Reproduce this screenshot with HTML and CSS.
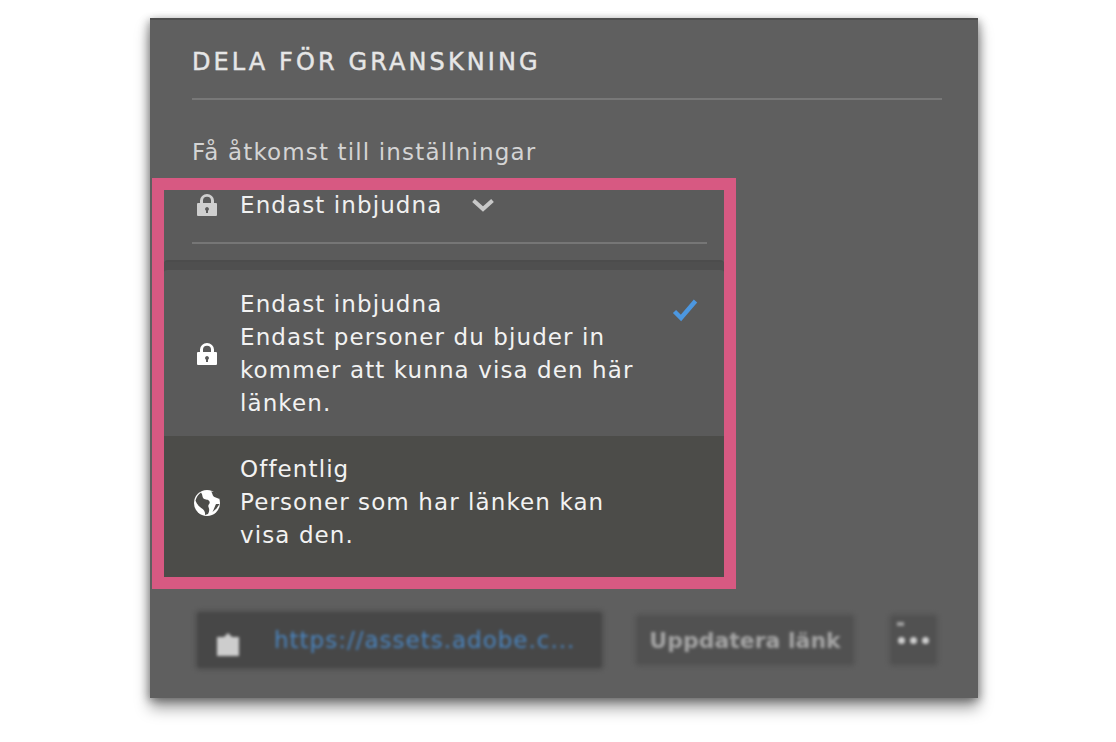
FILE: index.html
```html
<!DOCTYPE html>
<html lang="sv">
<head>
<meta charset="utf-8">
<title>Dela för granskning</title>
<link rel="stylesheet" href="styles.css">
</head>
<body>
<main class="panel">
  <header class="head">
    <h1 class="title">DELA FÖR GRANSKNING</h1>
    <p class="label">Få åtkomst till inställningar</p>
  </header>
  <section class="frame">
    <div class="trigger">
      <svg class="icon dim" viewBox="0 0 20 22"><path fill-rule="evenodd" d="M3 9V6.500a7 6.500 0 0 1 14 0V9h2a1 1 0 0 1 1 1v11a1 1 0 0 1-1 1H1a1 1 0 0 1-1-1V10a1 1 0 0 1 1-1zM6 9h8V6.500a4 3.800 0 0 0-8 0zM10 13a2 2 0 0 0-1 3.700V19h2v-2.300A2 2 0 0 0 10 13z"/></svg>
      <span>Endast inbjudna</span>
      <svg class="chev" viewBox="0 0 24 14"><path d="M2.500 2.500 12 11l9.500-8.500"/></svg>
    </div>
    <div class="rule"></div>
    <div class="menu">
      <div class="option">
        <svg class="icon" viewBox="0 0 20 22"><path fill-rule="evenodd" d="M3 9V6.500a7 6.500 0 0 1 14 0V9h2a1 1 0 0 1 1 1v11a1 1 0 0 1-1 1H1a1 1 0 0 1-1-1V10a1 1 0 0 1 1-1zM6 9h8V6.500a4 3.800 0 0 0-8 0zM10 13a2 2 0 0 0-1 3.700V19h2v-2.300A2 2 0 0 0 10 13z"/></svg>
        <p class="text">Endast inbjudna<br>Endast personer du bjuder in<br>kommer att kunna visa den här<br>länken.</p>
        <svg class="check" viewBox="0 0 26 24"><path d="M2.500 13.500 9 20 23.500 3"/></svg>
      </div>
      <div class="option alt">
        <svg class="icon globe" viewBox="0 0 26 26"><circle cx="13" cy="13" r="13"/><path class="land" d="M7 2.500c2 2.500 1 4.500 2.500 6 2 1.500 5 .5 6 3s-2 3-1 5.500 1 4.500-.5 7l-3 1c.5-3-1-5-3-6.500S3 15 1.500 10.500C2.500 7 4.500 4 7 2.500zM17 1.500c2 2 1 4 3.500 5.500l5 2-.5-3-4-4zM22 14c-1 2-2 5-3.500 8l4-3.500 3-4.500z"/></svg>
        <p class="text">Offentlig<br>Personer som har länken kan<br>visa den.</p>
      </div>
    </div>
  </section>
  <footer class="foot">
    <div class="url">
      <svg class="url-lock" viewBox="0 0 24 26"><path d="M8 7l4-4 4 4h7v19H1V7z"/></svg>
      <span class="link">https://assets.adobe.c...</span>
    </div>
    <div class="btn">Uppdatera länk</div>
    <div class="btn more"><span class="mark"></span><span class="dot"></span><span class="dot"></span><span class="dot"></span></div>
  </footer>
</main>
</body>
</html>
```

FILE: styles.css
```css
* { box-sizing: border-box; }
html, body { margin: 0; height: 100%; background: #fff; }
body {
  padding: 18px 138px 0 150px;
  font-family: "DejaVu Sans", "Open Sans", sans-serif;
  color: #ededed;
}
.panel {
  width: 828px;
  height: 680px;
  background: #5f5f5f;
  border-top: 2px solid #4e4e4e;
  box-shadow: 0 10px 14px rgba(0,0,0,.38), -3px 2px 8px rgba(0,0,0,.22), 3px 2px 8px rgba(0,0,0,.22);
  display: flex;
  flex-direction: column;
}
.head { margin: 0 36px 0 42px; }
.title {
  margin: 0;
  height: 80px;
  padding-top: 27px;
  font-size: 24px;
  line-height: 30px;
  font-weight: 400;
  letter-spacing: 3.1px;
  -webkit-text-stroke: .45px #e6e6e6;
  color: #e6e6e6;
  border-bottom: 2px solid #787878;
}
.label {
  margin: 0;
  padding-top: 38px;
  height: 78px;
  font-size: 23px;
  line-height: 28px;
  letter-spacing: 1.15px;
  color: #d4d4d4;
}
.frame {
  margin-left: 2px;
  width: 584px;
  height: 411px;
  border: 12px solid #d75982;
  background: #5b5b5b;
  display: flex;
  flex-direction: column;
}
.trigger {
  height: 30px;
  padding-left: 33px;
  display: flex;
  align-items: center;
  gap: 23px;
  font-size: 23px;
  letter-spacing: 1.1px;
  color: #f0f0f0;
}
.icon { width: 20px; height: 22px; flex: none; fill: #fff; }
.icon.dim { fill: #cfcfcf; }
.chev { width: 24px; height: 14px; margin-left: 6px; fill: none; stroke: #c8c8c8; stroke-width: 4; }
.rule { margin: 22px 17px 0 28px; height: 2px; background: #767676; }
.menu {
  margin-top: 16px;
  flex: 1;
  display: flex;
  flex-direction: column;
  background: #5a5a5a;
  border-top: 2px solid #4c4c4c;
  border-radius: 4px 4px 0 0;
  box-shadow: inset 0 8px 0 #4f4f4f;
  padding-top: 8px;
}
.option {
  height: 166px;
  padding: 1px 25px 0 33px;
  display: flex;
  align-items: center;
  gap: 23px;
  position: relative;
}
.option.alt {
  height: 141px;
  padding-top: 0;
  padding-bottom: 8px;
  background: #4c4c49;
}
.text {
  margin: 0;
  font-size: 23px;
  line-height: 33px;
  letter-spacing: 1.1px;
  color: #f2f2f2;
}
.globe { width: 26px; height: 26px; margin-left: -3px; margin-right: -3px; }
.globe .land { fill: #4c4c49; }
.check {
  position: absolute;
  top: 28px;
  right: 26px;
  width: 26px;
  height: 24px;
  fill: none;
  stroke: #4c97e0;
  stroke-width: 4.5;
}
.foot {
  margin: 19px 38px 0 43px;
  display: flex;
  align-items: center;
  filter: blur(1.4px);
  gap: 27px;
}
.url {
  width: 413px;
  height: 64px;
  padding-left: 19px;
  background: #474747;
  border: 4px solid #585858;
  border-radius: 8px;
  display: flex;
  align-items: center;
  gap: 34px;
}
.url-lock { width: 24px; height: 26px; fill: #cdcdcd; margin-top: 6px; }
.link { font-size: 23px; letter-spacing: 1px; color: #4a85c0; }
.btn {
  width: 224px;
  height: 56px;
  background: #515151;
  border: 4px solid #595959;
  border-radius: 8px;
  display: flex;
  align-items: center;
  justify-content: center;
  font-size: 22px;
  font-weight: 700;
  color: #a4a4a4;
  white-space: nowrap;
  position: relative;
}
.btn.more { width: 53px; gap: 5px; margin-left: 3px; }
.mark { position: absolute; top: 6px; left: 6px; width: 7px; height: 4px; background: #a0a0a0; }
.dot { width: 7px; height: 7px; border-radius: 50%; background: #cfcfcf; }
```
